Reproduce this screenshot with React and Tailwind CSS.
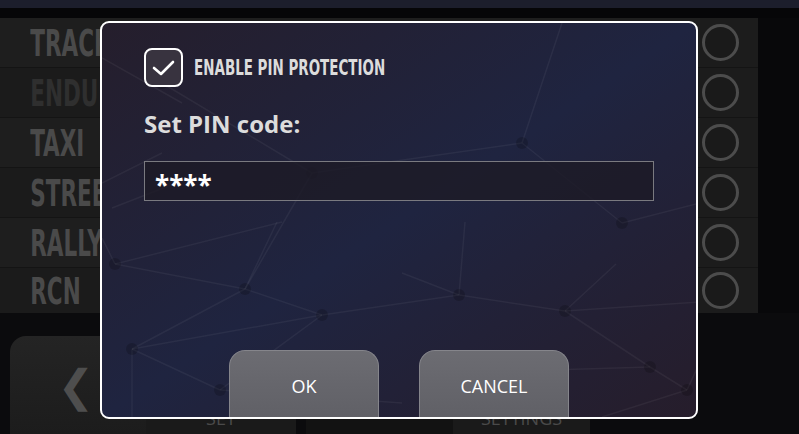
const rows = [
  { name: 'TRACK', dim: false },
  { name: 'ENDURO', dim: true },
  { name: 'TAXI', dim: false },
  { name: 'STREET', dim: false },
  { name: 'RALLY', dim: false },
  { name: 'RCN', dim: false },
];

const condensed = { fontFamily: '"Liberation Sans Narrow", "DejaVu Sans Condensed", "Liberation Sans", sans-serif' };
const openSans = { fontFamily: '"Open Sans", sans-serif' };

// faint network drawn behind the dialog (page coords minus dialog offset 100,21)
const nodes = [
  [13, 241], [143, 266], [220, 292], [30, 326], [118, 367], [357, 272], [463, 288], [548, 344], [585, 367],
  [60, 60], [210, 150], [420, 120], [520, 200],
];
const edges = [
  [[13, 241], [143, 266]], [[13, 241], [0, 215]], [[13, 241], [180, 199]], [[143, 266], [30, 326]],
  [[143, 266], [175, 199]], [[143, 266], [220, 292]], [[220, 292], [30, 326]], [[220, 292], [357, 272]],
  [[30, 326], [118, 367]], [[30, 326], [30, 398]], [[118, 367], [220, 292]], [[118, 367], [300, 380]],
  [[357, 272], [463, 288]], [[357, 272], [363, 199]], [[357, 272], [300, 250]], [[463, 288], [548, 344]],
  [[463, 288], [514, 241]], [[463, 288], [598, 279]], [[548, 344], [585, 367]], [[548, 344], [380, 349]],
  [[585, 367], [500, 394]], [[585, 367], [598, 339]], [[0, 35], [80, 80]], [[0, 160], [60, 130]],
  [[10, 185], [100, 150]], [[60, 60], [210, 150]], [[210, 150], [420, 120]], [[420, 120], [520, 200]],
  [[210, 150], [143, 266]], [[520, 200], [598, 180]], [[420, 120], [460, 0]],
];

function Network() {
  return (
    <svg className="absolute inset-0" width="598" height="398" viewBox="0 0 598 398">
      {edges.map(([a, b], i) => (
        <line key={i} x1={a[0]} y1={a[1]} x2={b[0]} y2={b[1]} stroke="rgba(255,255,255,0.05)" strokeWidth="1.5" />
      ))}
      {nodes.map(([x, y], i) => (
        <circle key={i} cx={x} cy={y} r="6" fill="rgba(0,0,0,0.18)" />
      ))}
    </svg>
  );
}

function Dialog() {
  return (
    <div className="absolute left-[100px] top-[21px] w-[598px] h-[398px] rounded-[9px] border-2 border-white overflow-hidden bg-[linear-gradient(to_bottom_right,#251e2c_0%,#1f2440_50%,#261d2b_100%)]">
      <Network />
      <div className="relative flex flex-col pl-[42px] pt-[25px]">
        <div className="flex items-center gap-[11px]">
          <div className="w-[39px] h-[39px] rounded-[8px] border-2 border-white bg-[#38333f] flex items-center justify-center">
            <svg width="28" height="22" viewBox="0 0 28 22">
              <path d="M4 11 L11 17 L23 5" fill="none" stroke="white" strokeWidth="2.6" strokeLinecap="round" strokeLinejoin="round" />
            </svg>
          </div>
          <span className="inline-block origin-left scale-x-[0.68] whitespace-nowrap text-[22px] font-bold text-[#dcdcdc]" style={condensed}>
            ENABLE PIN PROTECTION
          </span>
        </div>
        <div className="mt-[23px] text-[24px] font-bold text-[#dcdcdc] leading-[28px]" style={openSans}>
          Set PIN code:
        </div>
        <div className="mt-[23px] w-[510px] h-[40px] border border-[#7a7a80] bg-[#1d1a25]/80 flex items-center pl-[10px]">
          <span className="text-[26px] font-bold text-white leading-none pt-[8px]" style={openSans}>****</span>
        </div>
      </div>
      <div className="absolute left-[127px] top-[327px] flex gap-[40px]">
        {['OK', 'CANCEL'].map((t) => (
          <div key={t} className="w-[150px] h-[80px] rounded-t-[16px] border-t border-x border-[#85858b] bg-[linear-gradient(to_bottom,#6c6c72,#5e5e64)] flex justify-center pt-[26px]">
            <span className="text-[18px] text-white leading-none" style={openSans}>{t}</span>
          </div>
        ))}
      </div>
    </div>
  );
}

export default function App() {
  return (
    <div className="relative w-[799px] h-[434px] overflow-hidden bg-[#0a0a0c]">
      <div className="h-[8px] bg-[#1c1e2c]" />
      <div className="h-[10px] bg-[#060608]" />
      <div className="flex">
        <div className="w-[758px] flex flex-col">
          {rows.map((r, i) => (
            <div key={r.name} className={`flex items-center justify-between border-b border-[#141414] ${i % 2 === 0 ? 'bg-[#1e1e1e]' : 'bg-[#1b1b1b]'} ${i === rows.length - 1 ? 'h-[45px] border-b-0' : 'h-[50px]'}`}>
              <span className={`inline-block origin-left scale-x-[0.63] pl-[48px] whitespace-nowrap text-[38px] font-bold leading-none ${r.dim ? 'text-[#2f2f2f]' : 'text-[#4a4a4a]'}`} style={condensed}>
                {r.name}
              </span>
              <div className="w-[58px] h-full flex items-center pl-[2px] bg-[#1c1c1c]">
                <div className="w-[37px] h-[37px] rounded-full border-[3px] border-[#4c4c4c] bg-[#1a1a1a]" />
              </div>
            </div>
          ))}
        </div>
        <div className="flex-1 bg-[#08080a]" />
      </div>
      <div className="flex h-[121px] bg-[#0b0b0d] pt-[23px]">
        <div className="ml-[10px] w-[136px] rounded-tl-[16px] bg-[linear-gradient(to_bottom,#242424,#1c1c1c)] flex justify-center pt-[28px]">
          <span className="text-[44px] text-[#4e4e4e] leading-none pr-[4px]" style={{ fontFamily: '"DejaVu Sans", sans-serif' }}>❮</span>
        </div>
        <div className="w-[150px] bg-[#1a1a1a] flex justify-center items-end pb-[2px]">
          <span className="text-[18px] text-[#4a4a4a]" style={openSans}>SET</span>
        </div>
        <div className="ml-[10px] w-[147px] bg-[#121212]" />
        <div className="w-[137px] bg-[#1a1a1a] flex justify-center items-end pb-[2px]">
          <span className="text-[18px] text-[#4a4a4a]" style={openSans}>SETTINGS</span>
        </div>
      </div>
      <Dialog />
    </div>
  );
}
